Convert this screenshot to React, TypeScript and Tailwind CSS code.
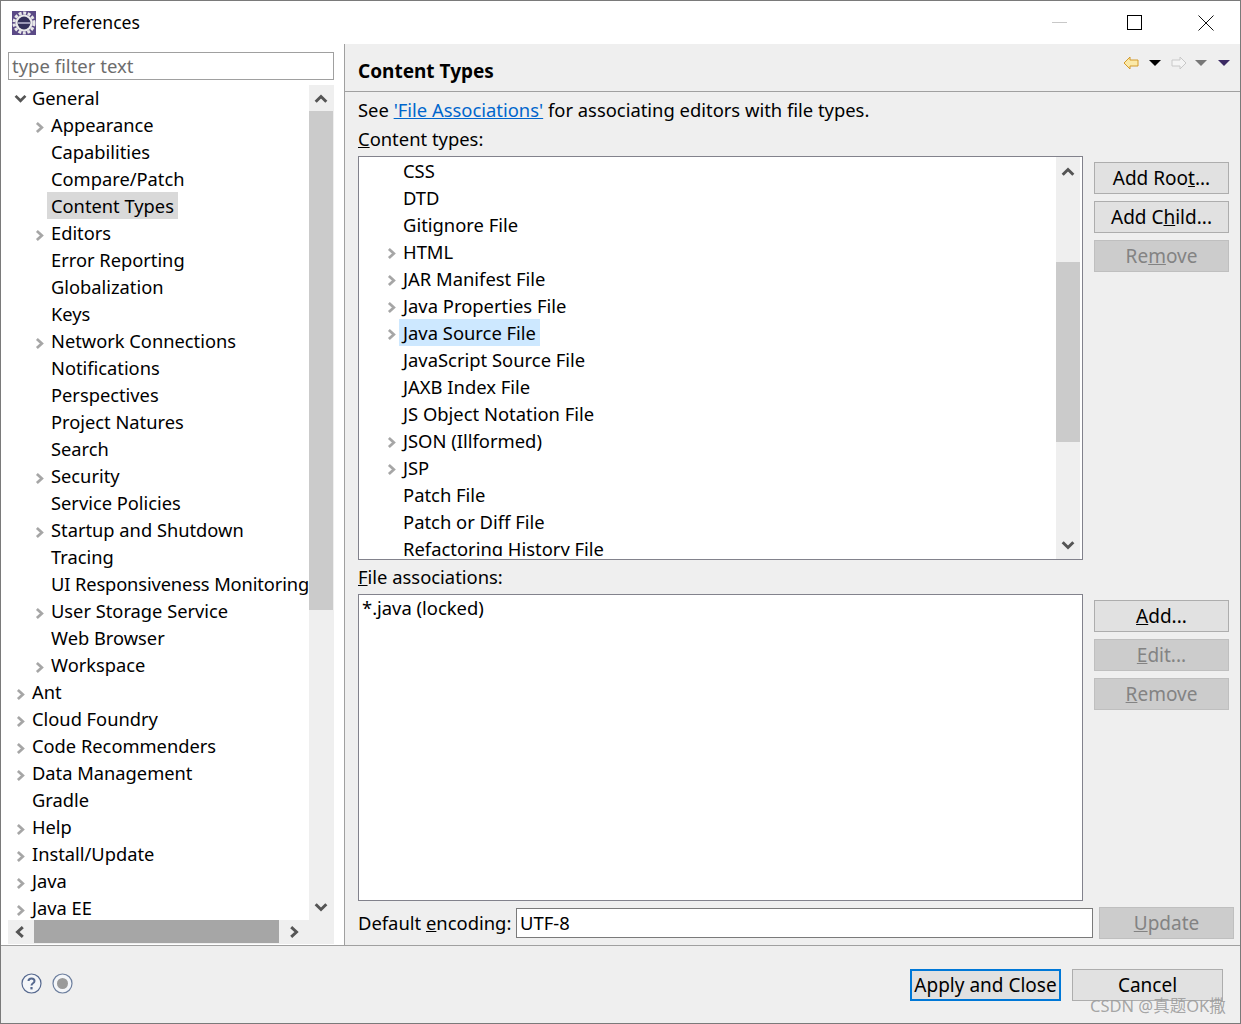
import React from "react";

const FONT = "font-['Noto_Sans','Noto_Sans_CJK_SC',sans-serif]";

interface TreeRow {
  label: string;
  level: 0 | 1;
  arrow?: "closed" | "open";
  selected?: boolean;
  tight?: boolean; // long row, has to stop at the scrollbar
}

const treeRows: TreeRow[] = [
  { label: "General", level: 0, arrow: "open" },
  { label: "Appearance", level: 1, arrow: "closed" },
  { label: "Capabilities", level: 1 },
  { label: "Compare/Patch", level: 1 },
  { label: "Content Types", level: 1, selected: true },
  { label: "Editors", level: 1, arrow: "closed" },
  { label: "Error Reporting", level: 1 },
  { label: "Globalization", level: 1 },
  { label: "Keys", level: 1 },
  { label: "Network Connections", level: 1, arrow: "closed" },
  { label: "Notifications", level: 1 },
  { label: "Perspectives", level: 1 },
  { label: "Project Natures", level: 1 },
  { label: "Search", level: 1 },
  { label: "Security", level: 1, arrow: "closed" },
  { label: "Service Policies", level: 1 },
  { label: "Startup and Shutdown", level: 1, arrow: "closed" },
  { label: "Tracing", level: 1 },
  { label: "UI Responsiveness Monitoring", level: 1, tight: true },
  { label: "User Storage Service", level: 1, arrow: "closed" },
  { label: "Web Browser", level: 1 },
  { label: "Workspace", level: 1, arrow: "closed" },
  { label: "Ant", level: 0, arrow: "closed" },
  { label: "Cloud Foundry", level: 0, arrow: "closed" },
  { label: "Code Recommenders", level: 0, arrow: "closed" },
  { label: "Data Management", level: 0, arrow: "closed" },
  { label: "Gradle", level: 0 },
  { label: "Help", level: 0, arrow: "closed" },
  { label: "Install/Update", level: 0, arrow: "closed" },
  { label: "Java", level: 0, arrow: "closed" },
  { label: "Java EE", level: 0, arrow: "closed" },
];

const contentTypes = [
  { label: "CSS" },
  { label: "DTD" },
  { label: "Gitignore File" },
  { label: "HTML", arrow: true },
  { label: "JAR Manifest File", arrow: true },
  { label: "Java Properties File", arrow: true },
  { label: "Java Source File", arrow: true, selected: true },
  { label: "JavaScript Source File" },
  { label: "JAXB Index File" },
  { label: "JS Object Notation File" },
  { label: "JSON (Illformed)", arrow: true },
  { label: "JSP", arrow: true },
  { label: "Patch File" },
  { label: "Patch or Diff File" },
  { label: "Refactoring History File" },
];

// small scrollbar / tree chevrons
const Chevron = ({ dir, color, size = 10 }: { dir: "up" | "down" | "left" | "right"; color: string; size?: number }) => {
  const paths = {
    right: "M3 1.5 L6.8 5 L3 8.5",
    left: "M7 1.5 L3.2 5 L7 8.5",
    up: "M1.2 7 L5 3.2 L8.8 7",
    down: "M1.2 3 L5 6.8 L8.8 3",
  };
  return (
    <svg width={size} height={size} viewBox="0 0 10 10" fill="none">
      <path d={paths[dir]} stroke={color} strokeWidth="2.1" />
    </svg>
  );
};

const Triangle = ({ color }: { color: string }) => (
  <svg width="12" height="6" viewBox="0 0 12 6">
    <path d="M0 0 H12 L6 6 Z" fill={color} />
  </svg>
);

const Btn = ({ children, disabled }: { children: React.ReactNode; disabled?: boolean }) => (
  <div
    className={`flex h-[32px] w-[135px] items-center justify-center border ${
      disabled ? "border-[#bfbfbf] bg-[#cccccc] text-[#838383]" : "border-[#adadad] bg-[#e1e1e1] text-black"
    }`}
  >
    <span>{children}</span>
  </div>
);

const PrefTree = () => (
  <div className="h-[835px] min-w-0 flex-1 overflow-hidden text-[18.3px]">
    <div className="-mt-[1px] flex flex-col">
      {treeRows.map((row) => (
        <div key={row.label} className="flex h-[27px] shrink-0 items-center">
          {row.level === 1 && <span className="w-[20px] shrink-0" />}
          <span className={`flex shrink-0 justify-center ${row.level === 0 ? "w-[24px]" : "w-[23px]"}`}>
            {row.arrow === "open" && (
              <span className="flex translate-y-[1px]"><Chevron dir="down" color="#555555" size={13} /></span>
            )}
            {row.arrow === "closed" && (
              <span className="flex translate-y-[3px]"><Chevron dir="right" color="#a6a6a6" size={13} /></span>
            )}
          </span>
          <span
            className={`whitespace-nowrap ${row.selected ? "-ml-[4px] bg-[#d9d9d9] px-[4px] leading-[27px]" : ""} ${
              row.tight ? "tracking-[-0.12px]" : ""
            }`}
          >
            {row.label}
          </span>
        </div>
      ))}
    </div>
  </div>
);

const App = () => {
  return (
    <div className={`relative h-[1024px] w-[1241px] overflow-hidden bg-white text-[19px] leading-[27px] text-black ${FONT}`}>
      <div className="flex h-[1024px] flex-col border border-[#7a7a7a]">
        {/* title bar */}
        <div className="flex h-[43px] shrink-0 items-center bg-white pl-[11px]">
          <svg width="24" height="24" viewBox="0 0 24 24">
            <rect width="24" height="24" fill="#5b4a86" />
            <circle cx="12" cy="12" r="10" fill="none" stroke="#e8e8e8" strokeWidth="3" strokeDasharray="3 1.6" />
            <circle cx="12" cy="12" r="8.6" fill="#ececec" />
            <circle cx="12" cy="12" r="6.4" fill="#33305a" />
            <rect x="5.8" y="11" width="12.4" height="2" fill="#9a97b5" />
          </svg>
          <span className="ml-[6px] text-[17.6px]">Preferences</span>
          <div className="ml-auto flex items-center">
            <div className="mr-[60px] h-px w-[15px] bg-[#c8c8c8]" />
            <div className="mr-[56px] h-[15px] w-[15px] border border-black" />
            <svg width="16" height="16" viewBox="0 0 16 16" className="mr-[26px]">
              <path d="M0.5 0.5 L15.5 15.5 M15.5 0.5 L0.5 15.5" stroke="#111" strokeWidth="1" />
            </svg>
          </div>
        </div>

        <div className="flex h-[901px] shrink-0">
          {/* left: filter and tree */}
          <div className="flex w-[343px] shrink-0 flex-col bg-white pl-[7px] pr-[10px] pt-[8px]">
            <div className="flex h-[28px] shrink-0 items-center border border-[#a0a0a0] pb-[2px] pl-[3px] text-[18.5px] text-[#6d6d6d]">
              type filter text
            </div>
            <div className="mt-[5px] flex">
              <div className="min-w-0 flex-1">
                <PrefTree />
              </div>
              <div className="flex h-[835px] w-[25px] shrink-0 flex-col bg-[#efefef]">
                <div className="flex h-[26px] items-center justify-center pr-[1px] pt-[2px]">
                  <Chevron dir="up" color="#555555" size={14} />
                </div>
                <div className="h-[499px] w-[24px] bg-[#cbcbcb]" />
                <div className="mb-[3px] mt-auto flex h-[20px] items-center justify-center pr-[1px]">
                  <Chevron dir="down" color="#555555" size={14} />
                </div>
              </div>
            </div>
            <div className="flex h-[24px] shrink-0 bg-[#efefef]">
              <div className="flex w-[26px] items-center justify-center pr-[3px]">
                <Chevron dir="left" color="#555555" size={14} />
              </div>
              <div className="h-[23px] w-[245px] bg-[#a6a6a6]" />
              <div className="flex w-[31px] items-center justify-center pr-[2px]">
                <Chevron dir="right" color="#555555" size={14} />
              </div>
            </div>
          </div>

          <div className="w-[1px] shrink-0 bg-[#a0a0a0]" />

          {/* right: content types page */}
          <div className="flex min-w-0 flex-1 flex-col bg-[#efefef]">
            <div className="flex h-[48px] shrink-0 items-start justify-between border-b border-[#a0a0a0] pl-[13px] pr-[10px]">
              <span className="mt-[14px] font-bold">Content Types</span>
              <div className="mt-[12px] flex items-center">
                <svg width="16" height="14" viewBox="0 0 16 14" className="mr-[1px]">
                  <path d="M1 7 L7 1 V4 H15 V10 H7 V13 Z" fill="#fbe9a8" stroke="#d39a2a" strokeWidth="1" />
                </svg>
                <span className="ml-[9px] flex"><Triangle color="#000000" /></span>
                <svg width="16" height="14" viewBox="0 0 16 14" className="ml-[10px]">
                  <path d="M15 7 L9 1 V4 H1 V10 H9 V13 Z" fill="#f4f4f4" stroke="#c8c8c8" strokeWidth="1" />
                </svg>
                <span className="ml-[8px] flex"><Triangle color="#777777" /></span>
                <span className="ml-[11px] flex"><Triangle color="#3b2a63" /></span>
              </div>
            </div>

            <div className="flex min-h-0 flex-1 flex-col pl-[13px] pr-[6px] text-[18.4px]">
              <div className="mt-[4px] h-[27px] shrink-0 whitespace-nowrap">
                See <a className="text-[#0066cc] underline">'File Associations'</a> for associating editors with file types.
              </div>
              <div className="mt-[2px] h-[31px] shrink-0">
                <u>C</u>ontent types:
              </div>
              <div className="flex shrink-0">
                <div className="flex h-[404px] w-[725px] shrink-0 border border-[#82828c] bg-white">
                  <div className="mb-[3px] min-w-0 flex-1 overflow-hidden">
                    {contentTypes.map((item) => (
                      <div key={item.label} className="flex h-[27px] items-center">
                        <span className="ml-[26px] flex w-[18px] translate-y-[2px] justify-start">
                          {item.arrow && <Chevron dir="right" color="#a6a6a6" size={13} />}
                        </span>
                        <span
                          className={`whitespace-nowrap ${item.selected ? "-ml-[4px] bg-[#cde8ff] px-[4px] leading-[27px]" : ""}`}
                        >
                          {item.label}
                        </span>
                      </div>
                    ))}
                  </div>
                  <div className="mr-[2px] flex w-[24px] shrink-0 flex-col bg-[#efefef]">
                    <div className="flex h-[28px] items-center justify-center pt-[1px]">
                      <Chevron dir="up" color="#555555" size={14} />
                    </div>
                    <div className="mt-[77px] h-[180px] bg-[#cbcbcb]" />
                    <div className="mb-[4px] mt-auto flex h-[20px] items-center justify-center">
                      <Chevron dir="down" color="#555555" size={14} />
                    </div>
                  </div>
                </div>
                <div className="ml-[11px] mt-[6px] flex flex-col gap-[7px] text-[19px]">
                  <Btn>Add Roo<u>t</u>...</Btn>
                  <Btn>Add C<u>h</u>ild...</Btn>
                  <Btn disabled>Re<u>m</u>ove</Btn>
                </div>
              </div>
              <div className="mt-[3px] h-[27px] shrink-0">
                <u>F</u>ile associations:
              </div>
              <div className="mt-[4px] flex shrink-0">
                <div className="h-[307px] w-[725px] shrink-0 border border-[#82828c] bg-white pl-[3px] leading-[25px]">*.java (locked)</div>
                <div className="ml-[11px] mt-[6px] flex flex-col gap-[7px] text-[19px]">
                  <Btn><u>A</u>dd...</Btn>
                  <Btn disabled><u>E</u>dit...</Btn>
                  <Btn disabled><u>R</u>emove</Btn>
                </div>
              </div>
              <div className="mt-[6px] flex shrink-0 items-center">
                <span className="mb-[2px] w-[158px] whitespace-nowrap">Default <u>e</u>ncoding:</span>
                <div className="flex h-[30px] w-[577px] items-center border border-[#7a7a7a] bg-white pb-[2px] pl-[3px]">UTF-8</div>
                <div className="ml-[6px] text-[19px]">
                  <Btn disabled><u>U</u>pdate</Btn>
                </div>
              </div>
            </div>
          </div>
        </div>

        {/* footer */}
        <div className="flex min-h-0 flex-1 items-start border-t border-[#a0a0a0] bg-[#efefef] pl-[20px] pr-[17px]">
          <div className="mt-[27px] flex items-center gap-[10px]">
            <svg width="21" height="21" viewBox="0 0 21 21">
              <circle cx="10.5" cy="10.5" r="9.5" fill="#f4f6f9" stroke="#56698f" strokeWidth="1.2" />
              <path d="M7.5 8 C7.5 4.5 13.5 4.5 13.5 8 C13.5 10.5 10.5 10 10.5 12.5" fill="none" stroke="#56698f" strokeWidth="2" />
              <rect x="9.4" y="14" width="2.2" height="2.4" fill="#56698f" />
            </svg>
            <svg width="21" height="21" viewBox="0 0 21 21">
              <circle cx="10.5" cy="10.5" r="9.5" fill="#f4f6f9" stroke="#6d7f9e" strokeWidth="1.2" />
              <circle cx="10.5" cy="10.5" r="5.5" fill="#9a9a9a" />
            </svg>
          </div>
          <div className="ml-auto mt-[23px] flex gap-[11px]">
            <div className="flex h-[32px] w-[151px] items-center justify-center border-2 border-[#0078d7] bg-[#e1e1e1]">Apply and Close</div>
            <div className="flex h-[32px] w-[151px] items-center justify-center border border-[#adadad] bg-[#e1e1e1]">Cancel</div>
          </div>
        </div>
      </div>
      <span className="absolute left-[1090px] top-[992px] whitespace-nowrap text-[16.5px] text-[#9c9c9c]/90">CSDN @真题OK撒</span>
    </div>
  );
};

export default App;
